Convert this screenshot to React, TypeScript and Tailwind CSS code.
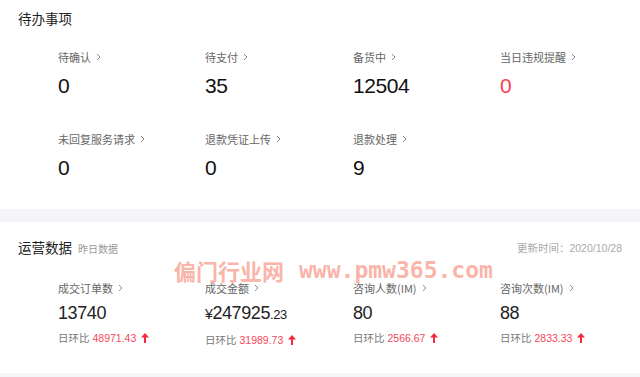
import React from "react";

const CJK = '"Noto Sans CJK SC", "Liberation Sans", sans-serif';
const NUM = '"Liberation Sans", Arial, sans-serif';

function Chevron() {
  return (
    <svg width="5" height="8" viewBox="0 0 5 8" className="ml-[5px] inline-block" fill="none">
      <path d="M1 1 L4 4 L1 7" stroke="#888" strokeWidth="1" />
    </svg>
  );
}

function UpArrow() {
  return (
    <svg width="8" height="10" viewBox="0 0 8 10" className="ml-[5px] inline-block" fill="#f5283f">
      <path d="M4 0 L8 4.4 L5 4.4 L5 10 L3 10 L3 4.4 L0 4.4 Z" />
    </svg>
  );
}

function Label({ text }: { text: string }) {
  return (
    <div className="flex items-center h-4 leading-4 text-[11px] text-[#666]" style={{ fontFamily: CJK }}>
      <span>{text}</span>
      <Chevron />
    </div>
  );
}

function Todo({ label, value, red }: { label: string; value: string; red?: boolean }) {
  return (
    <div className="flex flex-col">
      <Label text={label} />
      <div
        className={`mt-[7px] leading-[28px] text-[21px] tracking-[-0.4px] ${red ? "text-[#fb3d52]" : "text-[#111]"}`}
        style={{ fontFamily: NUM }}
      >
        {value}
      </div>
    </div>
  );
}

function Stat({
  label,
  value,
  dec,
  prefix,
  ratio,
}: {
  label: string;
  value: string;
  dec?: string;
  prefix?: string;
  ratio: string;
}) {
  return (
    <div className="flex flex-col">
      <Label text={label} />
      <div
        className="mt-[5px] leading-[24px] text-[18px] tracking-[-0.4px] text-[#222] flex items-baseline"
        style={{ fontFamily: NUM }}
      >
        {prefix && <span className="text-[14px]">{prefix}</span>}
        <span>{value}</span>
        {dec && <span className="text-[13px]">{dec}</span>}
      </div>
      <div className="mt-[5px] h-4 leading-4 flex items-center">
        <span className="text-[10.5px] text-[#777]" style={{ fontFamily: CJK }}>日环比</span>
        <span className="ml-[3px] text-[10.5px] text-[#f5475b]" style={{ fontFamily: NUM }}>{ratio}</span>
        <UpArrow />
      </div>
    </div>
  );
}

export default function App() {
  return (
    <div className="w-[640px] h-[377px] bg-[#f4f5f9] overflow-hidden relative">
      {/* 待办事项 */}
      <div className="bg-white h-[209px] pt-[8px] pl-[18px]">
        <div className="leading-[20px] text-[13.5px] text-[#222]" style={{ fontFamily: CJK }}>
          待办事项
        </div>
        <div className="mt-[21px] ml-[40px] grid grid-cols-[147px_148px_147px_1fr] gap-y-[31px]">
          <Todo label="待确认" value="0" />
          <Todo label="待支付" value="35" />
          <Todo label="备货中" value="12504" />
          <Todo label="当日违规提醒" value="0" red />
          <Todo label="未回复服务请求" value="0" />
          <Todo label="退款凭证上传" value="0" />
          <Todo label="退款处理" value="9" />
        </div>
      </div>

      {/* 运营数据 */}
      <div className="bg-white mt-[13px] h-[151px] pt-[15px] pl-[18px] pr-[18px]">
        <div className="flex items-center justify-between leading-[20px]">
          <div className="flex items-baseline" style={{ fontFamily: CJK }}>
            <span className="text-[13.5px] text-[#222]">运营数据</span>
            <span className="ml-[6px] text-[10px] text-[#999]">昨日数据</span>
          </div>
          <div className="text-[10.5px] text-[#aaa]" style={{ fontFamily: CJK }}>
            更新时间：<span style={{ fontFamily: NUM }}>2020/10/28</span>
          </div>
        </div>
        <div className="mt-[21px] ml-[40px] grid grid-cols-[147px_148px_147px_1fr]">
          <Stat label="成交订单数" value="13740" ratio="48971.43" />
          <Stat label="成交金额" prefix="¥" value="247925" dec=".23" ratio="31989.73" />
          <Stat label="咨询人数(IM)" value="80" ratio="2566.67" />
          <Stat label="咨询次数(IM)" value="88" ratio="2833.33" />
        </div>
      </div>

      {/* watermark */}
      <div className="absolute left-[174px] top-[256px] flex items-center pointer-events-none text-[#f9ada1] opacity-90">
        <span className="text-[22px] font-bold leading-[28px]" style={{ fontFamily: CJK }}>
          偏门行业网
        </span>
        <span
          className="ml-[15px] text-[23px] font-bold leading-[28px]"
          style={{ fontFamily: '"DejaVu Sans Mono", monospace' }}
        >
          www.pmw365.com
        </span>
      </div>
    </div>
  );
}
